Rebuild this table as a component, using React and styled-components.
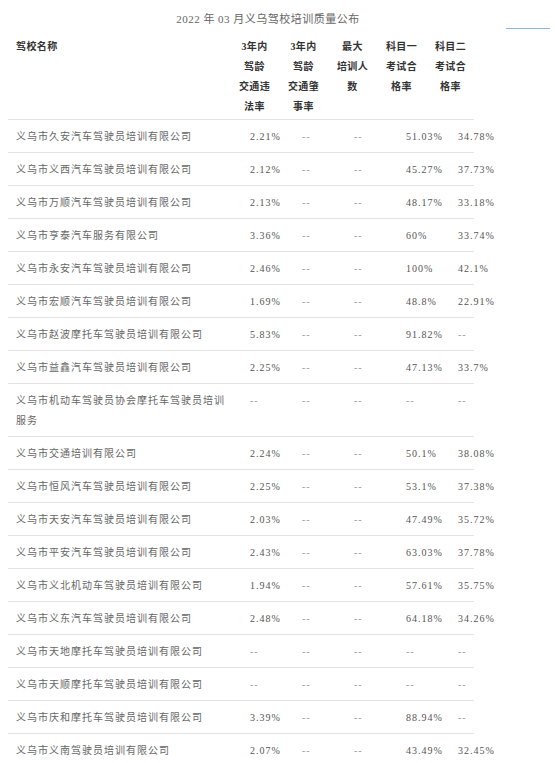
import styled, { createGlobalStyle } from "styled-components";

const GlobalStyle = createGlobalStyle`
  body {
    margin: 0;
    background: #ffffff;
    font-family: "Liberation Serif", "Noto Sans CJK SC", serif;
  }
`;

const Page = styled.div`
  padding: 9px 0 0 8px;
`;

const Title = styled.div`
  position: relative;
  width: 520px;
  text-align: center;
  font-size: 11px;
  line-height: 20px;
  color: #666;
  letter-spacing: 0.5px;
  margin-bottom: 8px;

  &::after {
    content: "";
    position: absolute;
    left: 498px;
    top: 19px;
    width: 44px;
    height: 1px;
    background: #8cb4e0;
  }
`;

const Table = styled.div`
  width: 466px;
`;

const HeaderRow = styled.div`
  display: grid;
  grid-template-columns: 222px repeat(5, 49px);
  padding-bottom: 2px;
  border-bottom: 1px solid #e3e3e3;
`;

const HeadCell = styled.div`
  padding-left: ${(p) => (p.$name ? "8px" : "0")};
  text-align: ${(p) => (p.$name ? "left" : "center")};
  font-size: 10px;
  line-height: 20px;
  font-weight: bold;
  color: #333;
  letter-spacing: 0.4px;
`;

const Row = styled.div`
  display: grid;
  grid-template-columns: 234px repeat(5, 52px);
  border-bottom: 1px solid #e3e3e3;
  width: 466px;
`;

const Cell = styled.div`
  padding: 7px 8px 5px;
  font-size: 10px;
  line-height: 20px;
  color: ${(p) => (p.$dash ? "#999" : p.$name ? "#666" : "#555")};
  letter-spacing: 1px;
  white-space: ${(p) => (p.$name ? "normal" : "nowrap")};
`;

const headers = [
  ["3年内", "驾龄", "交通违", "法率"],
  ["3年内", "驾龄", "交通肇", "事率"],
  ["最大", "培训人", "数"],
  ["科目一", "考试合", "格率"],
  ["科目二", "考试合", "格率"],
];

const rows = [
  ["义乌市久安汽车驾驶员培训有限公司", "2.21%", "--", "--", "51.03%", "34.78%"],
  ["义乌市义西汽车驾驶员培训有限公司", "2.12%", "--", "--", "45.27%", "37.73%"],
  ["义乌市万顺汽车驾驶员培训有限公司", "2.13%", "--", "--", "48.17%", "33.18%"],
  ["义乌市亨泰汽车服务有限公司", "3.36%", "--", "--", "60%", "33.74%"],
  ["义乌市永安汽车驾驶员培训有限公司", "2.46%", "--", "--", "100%", "42.1%"],
  ["义乌市宏顺汽车驾驶员培训有限公司", "1.69%", "--", "--", "48.8%", "22.91%"],
  ["义乌市赵波摩托车驾驶员培训有限公司", "5.83%", "--", "--", "91.82%", "--"],
  ["义乌市益鑫汽车驾驶员培训有限公司", "2.25%", "--", "--", "47.13%", "33.7%"],
  ["义乌市机动车驾驶员协会摩托车驾驶员培训服务", "--", "--", "--", "--", "--"],
  ["义乌市交通培训有限公司", "2.24%", "--", "--", "50.1%", "38.08%"],
  ["义乌市恒风汽车驾驶员培训有限公司", "2.25%", "--", "--", "53.1%", "37.38%"],
  ["义乌市天安汽车驾驶员培训有限公司", "2.03%", "--", "--", "47.49%", "35.72%"],
  ["义乌市平安汽车驾驶员培训有限公司", "2.43%", "--", "--", "63.03%", "37.78%"],
  ["义乌市义北机动车驾驶员培训有限公司", "1.94%", "--", "--", "57.61%", "35.75%"],
  ["义乌市义东汽车驾驶员培训有限公司", "2.48%", "--", "--", "64.18%", "34.26%"],
  ["义乌市天地摩托车驾驶员培训有限公司", "--", "--", "--", "--", "--"],
  ["义乌市天顺摩托车驾驶员培训有限公司", "--", "--", "--", "--", "--"],
  ["义乌市庆和摩托车驾驶员培训有限公司", "3.39%", "--", "--", "88.94%", "--"],
  ["义乌市义南驾驶员培训有限公司", "2.07%", "--", "--", "43.49%", "32.45%"],
];

export default function App() {
  return (
    <Page>
      <GlobalStyle />
      <Title>2022 年 03 月义乌驾校培训质量公布</Title>
      <Table>
        <HeaderRow>
          <HeadCell $name>驾校名称</HeadCell>
          {headers.map((lines, i) => (
            <HeadCell key={i}>
              {lines.map((l) => (
                <div key={l}>{l}</div>
              ))}
            </HeadCell>
          ))}
        </HeaderRow>
        {rows.map(([name, ...vals]) => (
          <Row key={name}>
            <Cell $name>{name}</Cell>
            {vals.map((v, i) => (
              <Cell key={i} $dash={v === "--"}>
                {v}
              </Cell>
            ))}
          </Row>
        ))}
      </Table>
    </Page>
  );
}
